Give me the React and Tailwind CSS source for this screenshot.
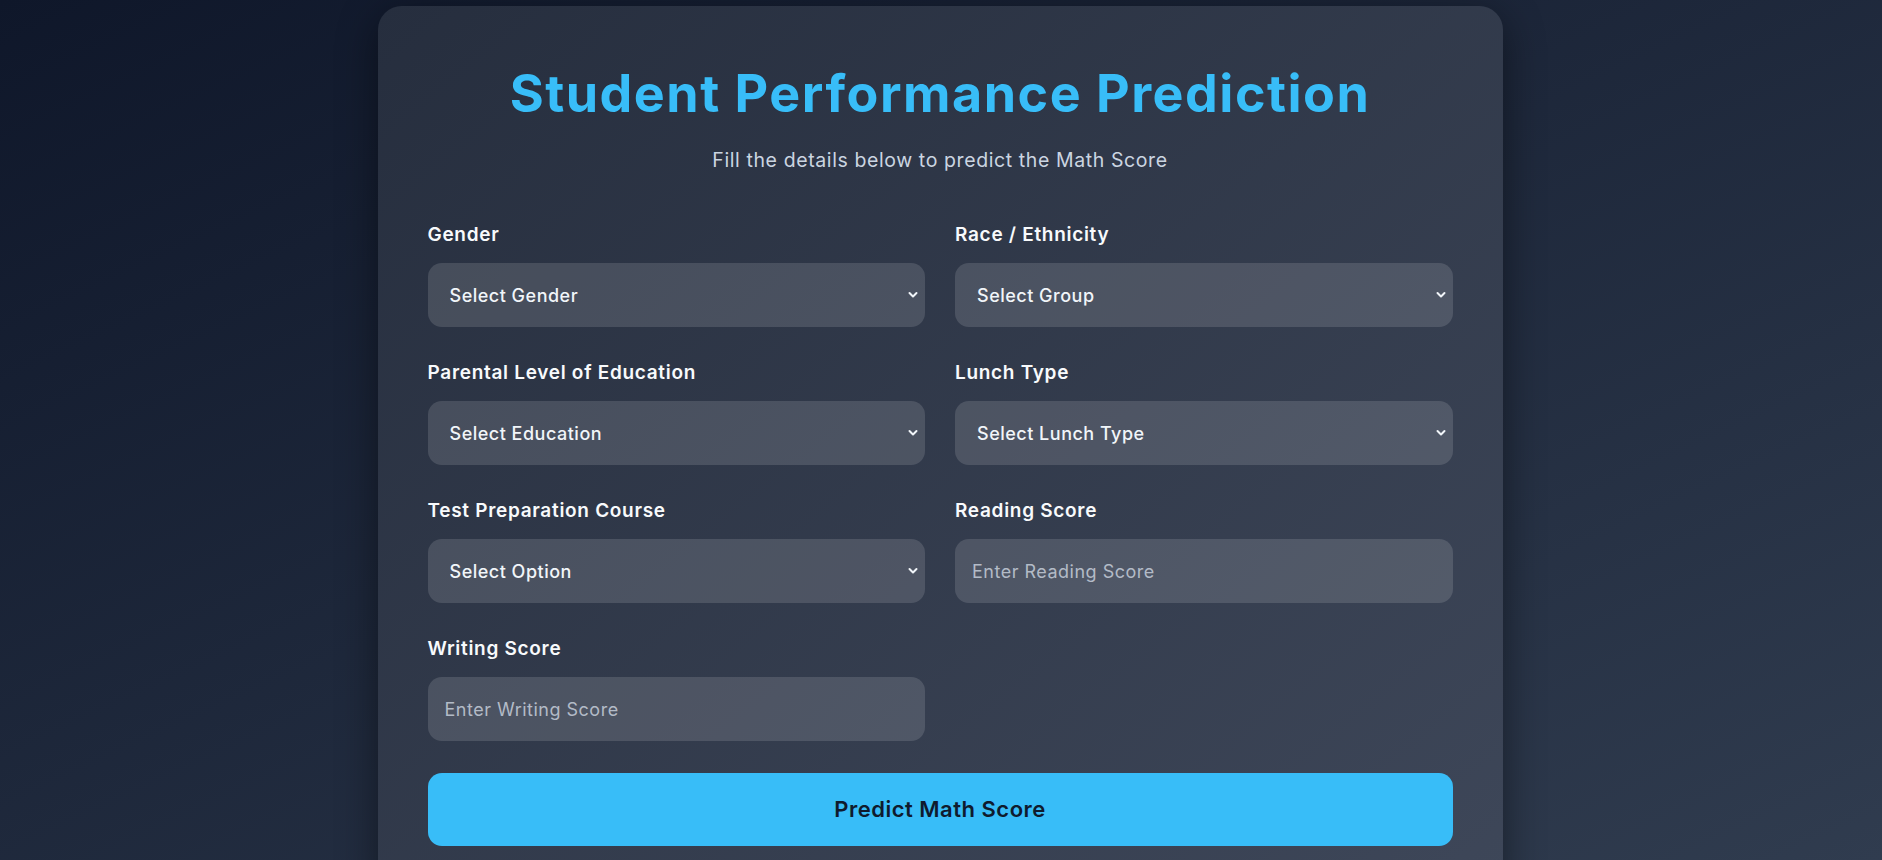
import React from "react";

const selectFields = [
  { label: "Gender", placeholder: "Select Gender", options: ["male", "female"] },
  {
    label: "Race / Ethnicity",
    placeholder: "Select Group",
    options: ["group A", "group B", "group C", "group D", "group E"],
  },
  {
    label: "Parental Level of Education",
    placeholder: "Select Education",
    options: [
      "associate's degree",
      "bachelor's degree",
      "high school",
      "master's degree",
      "some college",
      "some high school",
    ],
  },
  { label: "Lunch Type", placeholder: "Select Lunch Type", options: ["free/reduced", "standard"] },
  { label: "Test Preparation Course", placeholder: "Select Option", options: ["none", "completed"] },
];

const inputFields = [
  { label: "Reading Score", placeholder: "Enter Reading Score" },
  { label: "Writing Score", placeholder: "Enter Writing Score" },
];

function Chevron() {
  return (
    <svg
      className="pointer-events-none absolute right-[7px] top-1/2 -translate-y-1/2"
      width="10"
      height="7"
      viewBox="0 0 10 7"
      fill="none"
    >
      <path d="M1.5 1.5 L5 5 L8.5 1.5" stroke="#f1f5f9" strokeWidth="2" strokeLinecap="round" strokeLinejoin="round" />
    </svg>
  );
}

function Label({ children }) {
  return (
    <label className="mb-[14px] block text-[19px] font-semibold leading-[28px] tracking-[0.7px] text-[#f8fafc]">
      {children}
    </label>
  );
}

function SelectField({ label, placeholder, options }) {
  return (
    <div>
      <Label>{label}</Label>
      <div className="relative">
        <select
          defaultValue=""
          className="h-16 w-full appearance-none rounded-[14px] border-0 bg-white/[0.13] pl-[22px] pr-8 text-[18px] font-medium tracking-[0.5px] text-[#f1f5f9] outline-none"
        >
          <option value="" disabled>
            {placeholder}
          </option>
          {options.map((o) => (
            <option key={o} value={o} className="text-black">
              {o}
            </option>
          ))}
        </select>
        <Chevron />
      </div>
    </div>
  );
}

function InputField({ label, placeholder }) {
  return (
    <div>
      <Label>{label}</Label>
      <input
        type="number"
        placeholder={placeholder}
        className="h-16 w-full rounded-[14px] border-0 bg-white/[0.13] px-[17px] text-[18px] tracking-[0.5px] text-[#f1f5f9] outline-none placeholder:text-[#b3bbc7]"
      />
    </div>
  );
}

export default function App() {
  return (
    <div
      className="h-screen overflow-hidden bg-linear-to-br from-[#0f172a] to-[#303c4f] pt-[6px]"
      style={{ fontFamily: "Inter, 'Noto Sans', sans-serif" }}
    >
      <div className="mx-auto w-[1125px] -translate-x-[1px] rounded-3xl bg-linear-to-br from-[#262e3e] to-[#3e4759] px-[50px] pb-[50px] pt-[57px] shadow-[0_10px_40px_rgba(0,0,0,0.45)]">
        <h1 className="text-center text-[52px] font-bold leading-[62px] tracking-[1.5px] text-[#38bdf8]">
          Student Performance Prediction
        </h1>
        <p className="mb-[47px] mt-[22px] text-center text-[19.5px] leading-[27px] tracking-[0.6px] text-[#cbd5e1]">
          Fill the details below to predict the Math Score
        </p>

        <form className="grid grid-cols-2 gap-x-[30px] gap-y-8" onSubmit={(e) => e.preventDefault()}>
          {selectFields.map((f) => (
            <SelectField key={f.label} {...f} />
          ))}
          {inputFields.map((f) => (
            <InputField key={f.label} {...f} />
          ))}
          <button
            type="submit"
            className="col-span-2 h-[73px] rounded-[14px] bg-[#38bdf8] text-[22px] font-semibold tracking-[0.5px] text-[#0f1b2e]"
          >
            Predict Math Score
          </button>
        </form>
      </div>
    </div>
  );
}
